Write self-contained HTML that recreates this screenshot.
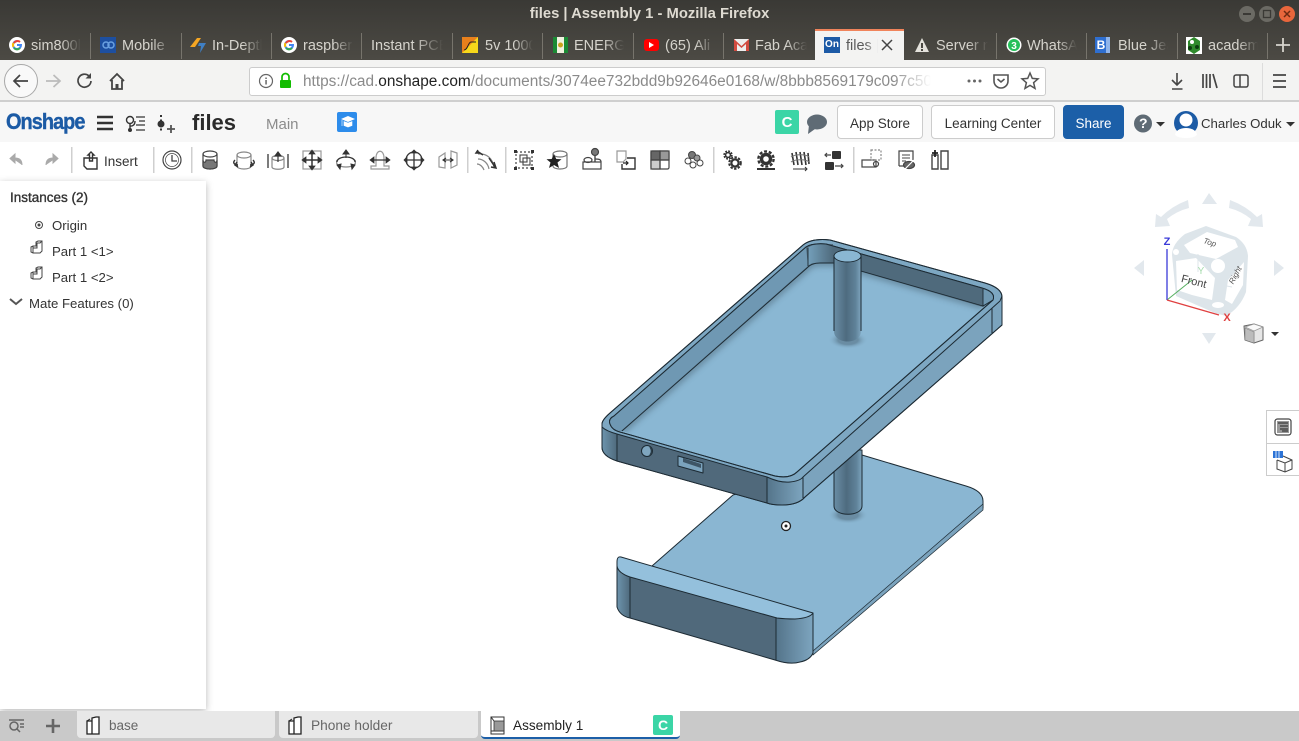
<!DOCTYPE html>
<html><head><meta charset="utf-8"><title>files | Assembly 1</title>
<style>
html,body{margin:0;padding:0;background:#fff;width:1299px;height:741px;overflow:hidden;font-family:"Liberation Sans","DejaVu Sans",sans-serif}
.a{position:absolute}
.t{position:absolute;white-space:nowrap}
.tab{position:absolute;top:37px;font-size:14.5px;line-height:18px;color:#d6d4cd;white-space:nowrap;overflow:hidden;-webkit-mask-image:linear-gradient(90deg,#000 60%,transparent 100%);mask-image:linear-gradient(90deg,#000 60%,transparent 100%)}
.sep{position:absolute;width:1px;background:#77746c;top:33px;height:26px}
.btn{position:absolute;top:105px;height:32px;border:1px solid #ccc;border-radius:4px;background:#fff;color:#333;font-size:13.5px;line-height:35px;text-align:center}
.side{font-size:13.2px;color:#333;line-height:16px}
svg{position:absolute;overflow:visible}
</style></head><body>
<div class="a" style="left:0;top:0;width:1299px;height:60px;background:linear-gradient(#3a3935,#4c4a44)"></div>
<div class="t" style="left:0;width:1299px;text-align:center;top:6px;font-size:14.8px;font-weight:bold;line-height:17px;color:#dfdbd2">files | Assembly 1 - Mozilla Firefox</div>
<svg style="left:0;top:0" width="1299" height="60">
<circle cx="1247" cy="14" r="8" fill="#6b6a64"/><rect x="1243" y="13" width="8" height="2" fill="#3a3935"/>
<circle cx="1267" cy="14" r="8" fill="#6b6a64"/><rect x="1263.5" y="10.5" width="7" height="7" fill="none" stroke="#3a3935" stroke-width="1.3"/>
<circle cx="1287" cy="14" r="8" fill="#e9663c"/><path d="M1284 11l6 6m0-6l-6 6" stroke="#6e2a12" stroke-width="1.5"/>
<circle cx="17" cy="45" r="8" fill="#fff"/><path d="M17 41a4 4 0 1 0 4 4h-4" fill="none" stroke="#4285f4" stroke-width="2"/><path d="M20 42a4 4 0 0 0-6 1" fill="none" stroke="#ea4335" stroke-width="2"/><path d="M13.500 43a4 4 0 0 0 0 4" fill="none" stroke="#fbbc05" stroke-width="2"/><path d="M14 48a4 4 0 0 0 6 0" fill="none" stroke="#34a853" stroke-width="2"/>
<rect x="100" y="37" width="16" height="16" fill="#1d4fa0"/><circle cx="106" cy="45" r="3" fill="none" stroke="#6aa0e0" stroke-width="1.5"/><circle cx="111" cy="45" r="3" fill="none" stroke="#6aa0e0" stroke-width="1.5"/>
<path d="M197 38l-7 9h5l6-9z" fill="#f5a623"/><path d="M199 43h7l-6 10 1-7h-3z" fill="#3f7fc4"/>
<circle cx="289" cy="45" r="8" fill="#fff"/><path d="M289 41a4 4 0 1 0 4 4h-4" fill="none" stroke="#4285f4" stroke-width="2"/><path d="M292 42a4 4 0 0 0-6 1" fill="none" stroke="#ea4335" stroke-width="2"/><path d="M285.500 43a4 4 0 0 0 0 4" fill="none" stroke="#fbbc05" stroke-width="2"/><path d="M286 48a4 4 0 0 0 6 0" fill="none" stroke="#34a853" stroke-width="2"/>
<rect x="462" y="37" width="16" height="16" fill="#f7d81b"/><path d="M462 37h16L462 53z" fill="#e8801c"/><path d="M464 50c4 0 4-8 7-8h5" stroke="#222" fill="none"/>
<rect x="553" y="37" width="15" height="16" fill="#1b8a34"/><rect x="557" y="37" width="7" height="16" fill="#f1f1e0"/><circle cx="560.500" cy="45" r="2.500" fill="#c9a31c"/>
<rect x="644" y="39" width="15" height="12" rx="3" fill="#f00"/><path d="M649 42l5 3-5 3z" fill="#fff"/>
<rect x="734" y="39" width="15" height="12" fill="#eee"/><path d="M734 39l7.500 7 7.500-7v12h-3v-7l-4.500 4-4.500-4v7h-3z" fill="#d24b40"/>
<path d="M915 52l7-14 7 14z" fill="#e4e2dc"/><rect x="921" y="43" width="2" height="5" fill="#4a4842"/><rect x="921" y="49" width="2" height="2" fill="#4a4842"/>
<circle cx="1014" cy="45" r="7.500" fill="#fff"/><circle cx="1014" cy="45" r="6" fill="#25c05a"/><text x="1014" y="49" font-size="10" font-weight="bold" fill="#fff" text-anchor="middle" font-family="Liberation Sans">3</text>
<rect x="1095" y="37" width="15" height="16" fill="#2f6fd0"/><rect x="1106" y="37" width="4" height="16" fill="#8fb4ea"/><text x="1101" y="49" font-size="12" font-weight="bold" fill="#fff" text-anchor="middle" font-family="Liberation Sans">B</text>
<rect x="1186" y="37" width="16" height="17" fill="#fff"/><path d="M1194 37l6 4v9l-6 4-6-4v-9z" fill="#2f8a2c"/><circle cx="1192" cy="42" r="2" fill="#fff"/><circle cx="1197" cy="47" r="2" fill="#0d3d10"/><circle cx="1190" cy="48" r="2" fill="#0d3d10"/>
<path d="M1283 38v14m-7-7h14" stroke="#d6d4cd" stroke-width="1.800"/>
</svg>
<div class="sep" style="left:90px"></div><div class="sep" style="left:181px"></div><div class="sep" style="left:271px"></div><div class="sep" style="left:361px"></div><div class="sep" style="left:452px"></div><div class="sep" style="left:542px"></div><div class="sep" style="left:633px"></div><div class="sep" style="left:723px"></div><div class="sep" style="left:996px"></div><div class="sep" style="left:1086px"></div><div class="sep" style="left:1177px"></div><div class="sep" style="left:1267px"></div>
<div class="tab" style="left:31px;width:50px">sim800l</div>
<div class="tab" style="left:122px;width:50px">Mobile</div>
<div class="tab" style="left:212px;width:50px">In-Depth</div>
<div class="tab" style="left:303px;width:50px">raspberry</div>
<div class="tab" style="left:371px;width:72px">Instant PCB</div>
<div class="tab" style="left:485px;width:48px">5v 1000</div>
<div class="tab" style="left:574px;width:50px">ENERGY</div>
<div class="tab" style="left:665px;width:50px">(65) Ali</div>
<div class="tab" style="left:755px;width:52px">Fab Academy</div>
<div class="a" style="left:815px;top:29px;width:89px;height:31px;background:#f3f3f2;border-top:2px solid #f0845b;box-sizing:border-box"></div>
<div class="tab" style="left:846px;width:32px;color:#5a5a5a">files |</div>
<div class="a" style="left:824px;top:37px;width:16px;height:16px;background:#1c5aa6;color:#fff;font-size:10px;font-weight:bold;line-height:16px;text-align:center">On</div>
<svg style="left:0;top:0" width="1299" height="100"><path d="M882 40l10 10m0-10l-10 10" stroke="#444" stroke-width="1.500"/></svg>
<div class="tab" style="left:936px;width:52px">Server not</div>
<div class="tab" style="left:1027px;width:50px">WhatsApp</div>
<div class="tab" style="left:1118px;width:50px">Blue Jeans</div>
<div class="tab" style="left:1208px;width:50px">academy</div>

<!-- nav bar -->
<div class="a" style="left:0;top:60px;width:1299px;height:40px;background:#f3f3f2"></div>
<div class="a" style="left:0;top:100px;width:1299px;height:2px;background:#cfcfcf"></div>
<div class="a" style="left:249px;top:67px;width:795px;height:27px;background:#fff;border:1px solid #ccc;border-radius:3px"></div>
<div class="a" style="left:1262px;top:63px;width:1px;height:37px;background:#dcdcdc"></div>
<div class="t" style="left:303px;top:72px;width:628px;overflow:hidden;font-size:15.4px;line-height:20px;color:#8a8a8a;-webkit-mask-image:linear-gradient(90deg,#000 94%,transparent 100%);mask-image:linear-gradient(90deg,#000 94%,transparent 100%)">https://cad.<span style="color:#222">onshape.com</span>/documents/3074ee732bdd9b92646e0168/w/8bbb8569179c097c500000</div>
<svg style="left:0;top:0" width="1299" height="100">
<circle cx="21" cy="81" r="16.500" fill="#f9f9f9" stroke="#a8a8a8"/><path d="M28 81H14m6-6l-6 6 6 6" fill="none" stroke="#444" stroke-width="1.700"/>
<path d="M60 81H46m7.500-6l6.500 6-6.500 6" fill="none" stroke="#bbb" stroke-width="1.700"/>
<path d="M91 81a6.500 6.500 0 1 1-2-5" fill="none" stroke="#444" stroke-width="1.700"/><path d="M91 73v5.500h-5.500z" fill="#444"/>
<path d="M110 81l7-7 7 7m-12-1v9h10v-9" fill="none" stroke="#444" stroke-width="1.800"/><rect x="115.500" y="84" width="3" height="5" fill="#444"/>
<circle cx="266" cy="81" r="6.500" fill="none" stroke="#666" stroke-width="1.200"/><rect x="265.300" y="80" width="1.500" height="4.500" fill="#666"/><rect x="265.300" y="77.500" width="1.500" height="1.500" fill="#666"/>
<rect x="280" y="80" width="11" height="8" rx="1" fill="#12bc00"/><path d="M282 80v-3a3.500 3.500 0 0 1 7 0v3" fill="none" stroke="#12bc00" stroke-width="1.700"/>
<circle cx="969" cy="81" r="1.500" fill="#666"/><circle cx="974.500" cy="81" r="1.500" fill="#666"/><circle cx="980" cy="81" r="1.500" fill="#666"/>
<path d="M994 75h14v6a7 7 0 0 1-14 0z" fill="none" stroke="#555" stroke-width="1.600"/><path d="M997.500 79l3.500 3 3.500-3" fill="none" stroke="#555" stroke-width="1.600"/>
<path d="M1030 73l2.300 5.400 5.700.5-4.400 3.800 1.400 5.700-5-3-5 3 1.400-5.700-4.400-3.800 5.700-.5z" fill="none" stroke="#555" stroke-width="1.500"/>
<path d="M1177 73v12m-5-5l5 5 5-5m-10 9h10.500" fill="none" stroke="#444" stroke-width="1.600"/>
<path d="M1203 74v14m3.500-14v14m3.500-14v14m3-14l4 14" fill="none" stroke="#444" stroke-width="1.700"/>
<rect x="1234" y="75" width="14" height="12" rx="2" fill="none" stroke="#444" stroke-width="1.500"/><path d="M1240 75v12" stroke="#444" stroke-width="1.500"/>
<path d="M1273 75h13m-13 6h13m-13 6h13" stroke="#444" stroke-width="1.700"/>
</svg>

<!-- onshape header -->
<div class="a" style="left:0;top:102px;width:1299px;height:40px;background:#f7f7f7"></div>
<div class="t" style="left:6px;top:108px;font-size:22.500px;font-weight:bold;color:#1c5ba5;line-height:28px;letter-spacing:-1.100px;transform:scaleX(.886);transform-origin:0 0;-webkit-text-stroke:.4px #1c5ba5">Onshape</div>
<svg style="left:0;top:0" width="1299" height="180">
<path d="M97 117h16M97 123h16M97 129h16" stroke="#333" stroke-width="2.400"/>
<circle cx="130" cy="120" r="3.500" fill="none" stroke="#333" stroke-width="1.400"/><path d="M130 123.500v8m5-10.500c0 6-5 5-5 5" fill="none" stroke="#333" stroke-width="1.400"/><circle cx="130" cy="130" r="2" fill="#333"/><path d="M136 117h9m-6 4h6m-9 4h9m-9 5h9" stroke="#555" stroke-width="1.400"/>
<path d="M161 115v18" stroke="#333" stroke-width="2" stroke-dasharray="2 2.500"/><circle cx="161" cy="124" r="3.500" fill="#333"/><path d="M167 129h8m-4-4v8" stroke="#555" stroke-width="1.800"/>
<rect x="337" y="112" width="20" height="20" rx="2" fill="#2d8ceb"/><path d="M341 119l7-3 7 3-7 3z" fill="#fff"/><path d="M344 121.500v4l4 1.500 4-1.500v-4l-4 1.500zM342 120v6" fill="#fff" stroke="#fff" stroke-width=".6"/>
<rect x="775" y="110" width="24" height="24" rx="2" fill="#3bd5a6"/>
<ellipse cx="817" cy="122" rx="10" ry="7.500" fill="#5f6b75"/><path d="M809 125l-1 9 7-5z" fill="#5f6b75"/>
<circle cx="1143" cy="123.500" r="9" fill="#5f6b75"/>
<path d="M1156 122h9l-4.500 4.500z" fill="#333"/>
<circle cx="1186" cy="123" r="12" fill="#1c5ba5"/><circle cx="1186" cy="120" r="6.500" fill="#fff"/><path d="M1175 135a11 7 0 0 1 22 0 12 5 0 0 1-22 0z" fill="#fff"/>
<path d="M1286 122h9l-4.500 4.500z" fill="#333"/>
</svg>
<div class="t" style="left:775px;top:111px;width:24px;text-align:center;font-size:15px;font-weight:bold;color:#fff;line-height:24px">C</div>
<div class="t" style="left:1143px;top:113px;width:0;text-indent:-4px;font-size:14px;font-weight:bold;color:#fff;line-height:21px">?</div>
<div class="t" style="left:192px;top:109px;font-size:22px;font-weight:bold;color:#2b2b2b;line-height:28px">files</div>
<div class="t" style="left:266px;top:116px;font-size:15px;color:#8c8c8c;line-height:18px">Main</div>
<div class="btn" style="left:837px;width:84px">App Store</div>
<div class="btn" style="left:931px;width:122px">Learning Center</div>
<div class="btn" style="left:1063px;width:59px;background:#1c5fa8;border-color:#1c5fa8;color:#fff">Share</div>
<div class="t" style="left:1201px;top:116px;font-size:13.200px;color:#333;line-height:16px">Charles Oduk</div>

<!-- toolbar -->
<div class="a" style="left:0;top:142px;width:1299px;height:38px;background:#fff"></div>
<div class="t" style="left:104px;top:153px;font-size:13.500px;color:#333;line-height:18px">Insert</div>
<svg style="left:0;top:0" width="1299" height="180" fill="none" stroke="#444" stroke-width="1.200">
<g fill="#cfcfcf" stroke="none"><rect x="71" y="147" width="1.500" height="26"/><rect x="153" y="147" width="1.500" height="26"/><rect x="191" y="147" width="1.500" height="26"/><rect x="467" y="147" width="1.500" height="26"/><rect x="505" y="147" width="1.500" height="26"/><rect x="713" y="147" width="1.500" height="26"/><rect x="853" y="147" width="1.500" height="26"/></g>
<path d="M22 165c0-5-3-7-7-7h-3m3-4-5 4.500 5 4.500z" fill="#aaa" stroke="#aaa" stroke-width="1"/>
<path d="M46 165c0-5 3-7 7-7h3m-3-4 5 4.500-5 4.500z" fill="#aaa" stroke="#aaa" stroke-width="1"/>
<path d="M84 158h13v11H87l-3-3zM88 155l3-3 3 3-1.500 0v6h-3v-6z" fill="#fff" stroke="#333" stroke-width="1.400"/>
<circle cx="172" cy="160" r="9" stroke-width="1.200"/><circle cx="172" cy="160" r="6.500" stroke-width=".7"/><path d="M172 155v6h5" stroke-width="1.300"/>
<g transform="translate(210,160)"><ellipse cx="0" cy="-6" rx="7" ry="3"/><path d="M-7-6V6c0 4 14 4 14 0V-6"/><path d="M-7 0c0 3 3 3 3 0h8c0 3 3 3 3 0V6c0 4-14 4-14 0z" fill="#777"/></g>
<g transform="translate(244,160)"><ellipse cx="0" cy="-5" rx="7" ry="3" stroke="#888"/><path d="M-7-5V6c0 4 14 4 14 0V-5" stroke="#888"/><path d="M-9 0c-3 3 0 5 3 5m-1-3-2 3 3 2M9 0c3 3 0 5-3 5m1-3 2 3-3 2" stroke="#333" stroke-width="1.400"/></g>
<g transform="translate(278,160)"><path d="M-10-6V8M10-6V8" stroke-width="1.400"/><ellipse cx="0" cy="-2" rx="6" ry="2.500" stroke="#888"/><path d="M-6-2V7c0 3 12 3 12 0V-2" stroke="#888"/><path d="M0 2v-9m-3 3 3-4 3 4z" fill="#333" stroke="#333"/></g>
<g transform="translate(312,160)"><rect x="-9" y="-9" width="18" height="18" stroke="#999"/><path d="M0-8V8M-8 0H8" stroke-width="1.500" stroke="#333"/><path d="M-3-6 0-10 3-6zM-3 6 0 10 3 6zM-6-3-10 0-6 3zM6-3 10 0 6 3z" fill="#333" stroke="#333" stroke-width=".8"/></g>
<g transform="translate(346,160)"><path d="M-9 0c-2 5 3 7 9 7s11-2 9-7" stroke="#888"/><path d="M-3-6 0-10 3-6zM-9 5-6 9-5 4zM9 5 6 9 5 4zM0-7v5" fill="#333" stroke="#333" stroke-width="1"/><path d="M-9 2c0-3 4-5 9-5s9 2 9 5" stroke="#333" stroke-width="1.300"/></g>
<g transform="translate(380,160)"><path d="M-4-2c0-9 8-9 8 0v8h5v3H-9V6h5z" stroke="#999"/><path d="M-9 0H9" stroke="#333" stroke-width="1.300"/><path d="M-6-3-10 0-6 3zM6-3 10 0 6 3z" fill="#333" stroke="#333" stroke-width=".8"/></g>
<g transform="translate(414,160)"><circle r="8" stroke="#333" stroke-width="1.300"/><path d="M0-8V8M-8 0H8" stroke="#333" stroke-width="1.300"/><path d="M-3-7 0-10 3-7zM-3 7 0 10 3 7zM-7-3-10 0-7 3zM7-3 10 0 7 3z" fill="#333" stroke="#333" stroke-width=".8"/></g>
<g transform="translate(448,160)"><path d="M-9-3-3-7V8L-9 7zM9-7 3-9V8L9 5z" stroke="#999"/><path d="M-5 0H5m-3-2 3 2-3 2m-4-4-3 2 3 2" stroke="#333" stroke-width="1.100"/></g>
<g transform="translate(486,160)"><path d="M-8-6C0-7 7-2 8 8M-8-1C-3-1 2 3 3 9M-9 4C-6 4-3 7-2 10" stroke="#888"/><path d="M-9-9-3-5M-8-10l-2 3 4 0M3-2 9 7M8 2l2 6-5-1" stroke="#333" stroke-width="1.500"/></g>
<g transform="translate(524,160)"><rect x="-8" y="-8" width="16" height="16" stroke-dasharray="2 2"/><rect x="-4" y="-5" width="7" height="7" stroke-width="1.100"/><rect x="-1" y="-2" width="7" height="7" stroke-width="1.100"/><g fill="#333" stroke="none"><rect x="-10" y="-10" width="3" height="3"/><rect x="7" y="-10" width="3" height="3"/><rect x="-10" y="7" width="3" height="3"/><rect x="7" y="7" width="3" height="3"/></g></g>
<g transform="translate(558,160)"><ellipse cx="2" cy="-6" rx="7" ry="3" stroke="#777"/><path d="M-5-6V6c0 4 14 4 14 0V-6" stroke="#777"/><path d="M-4-6-1.700-1 3.500-.7-.5 2.500 1 8-4 5-9 8-7.500 2.500-11.500-.7-6.300-1z" fill="#222" stroke="none"/></g>
<g transform="translate(592,160)"><rect x="-9" y="2" width="18" height="7" fill="#fff"/><ellipse cx="-4" cy="0" rx="4" ry="2.500"/><path d="M3-1c3 0 6 0 6 3"/><circle cx="3" cy="-8" r="3.500" fill="#777"/><path d="M3-4v6" stroke-width="1.400"/></g>
<g transform="translate(626,160)"><path d="M-9-9h9v8l-3 3h-6z" stroke="#999"/><path d="M-4 4V9H9V-2H1" stroke="#333" stroke-width="1.400"/><path d="M-3 3h5m-2-2 2 2-2 2" stroke="#222"/></g>
<g transform="translate(660,160)"><rect x="-9" y="-9" width="18" height="18" rx="1.500"/><rect x="-9" y="-9" width="9" height="9" fill="#666"/><rect x="0" y="-9" width="9" height="9" fill="#999"/><rect x="-9" y="0" width="9" height="9" fill="#ccc"/><path d="M0-9V9M-9 0H9"/></g>
<g transform="translate(694,160)" stroke-width="1"><circle cx="-2" cy="-5" r="3.500" fill="#777"/><circle cx="3" cy="-2" r="3" fill="#999"/><circle cx="-6" cy="1" r="3"/><circle cx="6" cy="3" r="3"/><circle cx="-1" cy="5" r="3"/></g>
<g transform="translate(732,160)"><circle cx="-4" cy="-5" r="3.800" stroke="#333" stroke-width="1.800" stroke-dasharray="1.800 1.200"/><circle cx="-4" cy="-5" r="2.400" stroke="#333" stroke-width="1.500"/><circle cx="3" cy="3" r="5.800" stroke="#333" stroke-width="2" stroke-dasharray="2.400 1.400"/><circle cx="3" cy="3" r="3.600" stroke="#333" stroke-width="2.200"/></g>
<g transform="translate(766,160)"><circle cy="-1" r="7.600" stroke="#333" stroke-width="2.400" stroke-dasharray="3 1.800"/><circle cy="-1" r="4.500" stroke="#333" stroke-width="3.400"/><rect x="-9" y="8" width="18" height="2" fill="#333" stroke="none"/></g>
<g transform="translate(800,160)" stroke="#333" stroke-width="1.600"><path d="M-8-7-6 5M-4-8-2 5M0-8 2 5M4-8 6 5M8-7 9 4"/><path d="M-9-3c4-3 15-3 18 0M-9 2c4-3 15-3 18 0" stroke="#777" stroke-width="1"/><path d="M-7 9H7m-2-2 2 2-2 2" stroke-width="1"/></g>
<g transform="translate(834,160)"><rect x="-2" y="-9" width="9" height="8" rx="1" fill="#333" stroke="none"/><rect x="-9" y="2" width="9" height="8" rx="1" fill="#333" stroke="none"/><path d="M-3-5h-6m2-2-2 2 2 2M1 6h8m-2-2 2 2-2 2" stroke-width="1.200"/></g>
<g transform="translate(872,160)"><rect x="-10" y="0" width="14" height="7"/><rect x="-1" y="-10" width="10" height="10" stroke-dasharray="2 1.500" stroke="#888"/><circle cx="4" cy="4" r="2.500"/></g>
<g transform="translate(906,160)"><path d="M-7 6V-9H7V0M-7 6H0"/><path d="M-4-5h8M-4-2h8M-4 1h4" stroke-width=".9"/><ellipse cx="3" cy="5" rx="5.500" ry="3.500" fill="#666"/><path d="M-2 10 8 0" stroke="#fff" stroke-width="1.200"/></g>
<g transform="translate(940,160)"><path d="M-8-5h6V9h-6zM1-9h7V9H1z" stroke-width="1.400"/><path d="M-5-3V-10m-3 3H-2" stroke-width="1.800" stroke="#222"/></g>
</svg>

<!-- sidebar -->
<div class="a" style="left:0;top:181px;width:206px;height:528px;background:#fff;box-shadow:0 2px 7px rgba(0,0,0,.28)"></div>
<div class="t side" style="left:10px;top:190px;font-size:13.500px;-webkit-text-stroke:.35px #333">Instances (2)</div>
<div class="t side" style="left:52px;top:218px">Origin</div>
<div class="t side" style="left:52px;top:244px">Part 1 &lt;1&gt;</div>
<div class="t side" style="left:52px;top:270px">Part 1 &lt;2&gt;</div>
<div class="t side" style="left:29px;top:296px">Mate Features (0)</div>
<svg style="left:0;top:180px" width="206" height="140" fill="none" stroke="#444">
<circle cx="39" cy="45" r="3.500"/><circle cx="39" cy="45" r="1.500" fill="#444" stroke="none"/>
<path d="M31 67l2-1h3v-4l2-1h4v10l-2 2H33l-2-1zM33 66v7M42 61l-2 2h-3v5h-4" stroke-width="1"/>
<path d="M31 93l2-1h3v-4l2-1h4v10l-2 2H33l-2-1zM33 92v7M42 87l-2 2h-3v5h-4" stroke-width="1"/>
<path d="M10 119l6 5 6-5" stroke-width="2" stroke="#555"/>
</svg>

<!-- 3D model -->
<svg style="left:0;top:0" width="1299" height="741" viewBox="0 0 1299 741" stroke-linejoin="round">
<defs>
<linearGradient id="pin" x1="0" x2="1" y1="0" y2="0"><stop offset="0" stop-color="#6a8ea6"/><stop offset=".45" stop-color="#4e6b7f"/><stop offset=".8" stop-color="#5f8299"/><stop offset="1" stop-color="#7ea5be"/></linearGradient>
<linearGradient id="cor" x1="0" x2="1" y1="0" y2="0"><stop offset="0" stop-color="#54748a"/><stop offset="1" stop-color="#7da5bf"/></linearGradient>
<linearGradient id="corl" x1="0" x2="1" y1="0" y2="0"><stop offset="0" stop-color="#6d94ad"/><stop offset="1" stop-color="#4f6a7c"/></linearGradient>
<linearGradient id="corb" x1="0" x2="1" y1="0" y2="0"><stop offset="0" stop-color="#74a0bb"/><stop offset="1" stop-color="#4f6a7c"/></linearGradient>
<radialGradient id="shade" cx=".5" cy=".5" r=".5"><stop offset=".5" stop-color="#4f6a7c" stop-opacity=".55"/><stop offset="1" stop-color="#8ab7d3" stop-opacity="0"/></radialGradient>
<clipPath id="floor"><path d="M622 431L807 268Q811 263 820 263H833L983 306L993 300L797 472Q790 479 775 476Z"/></clipPath>
<filter id="bl" x="-20%" y="-20%" width="140%" height="140%"><feGaussianBlur stdDeviation="3"/></filter>
</defs>
<!-- base plate -->
<path d="M862 455L966 486Q983 491 983 501L983 508L813 654L800 620L652 566L733 495Z" fill="#8ab6d2" stroke="#1c2a33" stroke-width="1"/>
<path d="M983 504L813 651L813 655L983 510Z" fill="#7ba3bd" stroke="#1c2a33" stroke-width=".7"/>
<ellipse cx="848" cy="515" rx="20" ry="9" fill="url(#shade)"/>
<!-- lower pin -->
<path d="M834 450V506C834 517 862 517 862 506V450Z" fill="url(#pin)" stroke="#1c2a33" stroke-width="1"/>
<!-- bottom block -->
<path d="M617 568V607Q620 616 630 618L775 660Q790 665 800 662Q810 660 813 653V613L777 618L630 577Q620 575 617 568Z" fill="#50697b"/>
<path d="M617 568Q620 575 630 577V618Q620 616 617 607Z" fill="url(#corl)"/>
<path d="M776 618Q800 620 813 613V653Q810 660 800 662Q785 665 776 660Z" fill="url(#cor)"/>
<path d="M617 562Q617 556 621 557L813 613Q810 618 795 619Q785 619 777 618L630 577Q618 573 617 566Z" fill="#94c0dc" stroke="#1c2a33" stroke-width="1"/>
<path d="M617 566V607Q620 616 630 618L775 660Q790 665 800 662Q810 660 813 653V613M630 577V618M776 618V660" fill="none" stroke="#1c2a33" stroke-width="1"/>
<!-- origin -->
<circle cx="786" cy="526" r="4.500" fill="#fff" stroke="#222" stroke-width="1.300"/><circle cx="786" cy="526" r="1.500" fill="#222"/>
<!-- tray body -->
<path d="M602 424Q602 420 610 413L803 245Q812 238 830 240L985 283Q1002 288 1002 297V325L805 497Q798 505 782 505Q772 505 767 503L617 461Q602 456 602 447Z" fill="#7da7c2" stroke="#1c2a33" stroke-width="1"/>
<!-- tray front wall -->
<path d="M602 427Q606 431 617 434L767 477Q780 483 790 482Q800 481 803 477L803 498Q798 505 782 505Q772 505 767 503L617 461Q602 456 602 447Z" fill="#50697b"/>
<path d="M602 427Q606 431 617 434V461Q602 456 602 447Z" fill="url(#corl)"/>
<path d="M767 477Q780 483 790 482Q800 481 803 477V498Q798 505 782 505Q772 505 767 503Z" fill="url(#cor)"/>
<path d="M803 477L1000 301V326L803 498Z" fill="#7ba3bd"/>
<path d="M602 427Q606 431 617 434L767 477Q780 483 790 482Q800 481 803 477L1000 301L1002 296M617 434V461M767 477V503M803 477V498M992 308V333" fill="none" stroke="#1c2a33" stroke-width="1"/>
<path d="M602 424Q602 420 610 413L803 245Q812 238 830 240L985 283Q1002 288 1002 297V325L805 497Q798 505 782 505Q772 505 767 503L617 461Q602 456 602 447Z" fill="none" stroke="#1c2a33" stroke-width="1"/>
<!-- inner well -->
<path d="M610 424Q608 419 614 416L806 247Q812 243 826 244L982 288Q996 292 993 300L797 472Q790 479 775 476L620 432Q612 430 610 424Z" fill="#8ab7d3" stroke="#1c2a33" stroke-width="1"/>
<!-- inner walls -->
<path d="M806 247Q812 243 826 244L982 288Q996 292 993 300L983 307L862 272L833 263H817Q810 263 807 268L622 431L620 431Q612 430 610 424Q608 419 614 416Z" fill="#4f6a7c"/>
<path d="M614 416L806 247L808 266L621 431Q612 430 610 424Q608 419 614 416Z" fill="#6f98b3"/>
<path d="M808 248V266Q812 262 820 263H833V244Q812 243 808 248Z" fill="url(#corb)"/>
<path d="M983 289L983 306L993 300Q996 292 983 289Z" fill="#6f98b2"/>
<g clip-path="url(#floor)"><path d="M622 431L807 268Q811 263 820 263H833L983 306" fill="none" stroke="#4f6a7c" stroke-width="7" opacity=".55" filter="url(#bl)"/></g>
<path d="M806 247Q812 243 826 244L982 288Q996 292 993 300L797 472Q790 479 775 476L620 432Q612 430 610 424Q608 419 614 416Z" fill="none" stroke="#1c2a33" stroke-width="1"/>
<path d="M622 431L807 268Q811 263 820 263H833L983 306L993 300M808 248V266M983 289V306" fill="none" stroke="#1c2a33" stroke-width=".9"/>
<!-- upper pin -->
<ellipse cx="848" cy="340" rx="20" ry="9" fill="url(#shade)"/>
<path d="M834 255V331C834 345 861 345 861 331V255Z" fill="url(#pin)"/>
<path d="M834 255V331M861 255V331" stroke="#1c2a33" stroke-width="1" fill="none"/>
<ellipse cx="847.500" cy="256" rx="13.500" ry="6" fill="#8ab7d3" stroke="#1c2a33" stroke-width=".9"/>
<!-- ports -->
<circle cx="647" cy="451" r="5.500" fill="#7fa6bf" stroke="#1c2a33" stroke-width="1"/><path d="M650 447a6 6 0 0 1 0 8" stroke="#2a3b46" stroke-width="1.500" fill="none"/>
<path d="M678 456L703 463V473L678 466Z" fill="#7ba3bd" stroke="#1c2a33" stroke-width="1"/><path d="M683 458L701 464V468L683 462Z" fill="#3e5566"/>
<!-- gizmo -->
<g fill="#e2e8ed">
<path d="M1202 204l7-11 8 11zM1202 333h14l-7 11zM1144 260v16l-10-8zM1274 260v16l10-8z"/>
<path d="M1188 200L1189 208Q1177 211 1167 219L1170 226L1155 227L1156 214L1161 217Q1172 206 1188 200Z"/>
<path d="M1230 200L1229 208Q1241 211 1251 219L1248 226L1263 227L1262 214L1257 217Q1246 206 1230 200Z"/>
</g>
<path d="M1206 226L1236 237Q1247 244 1248 256L1246 292Q1240 308 1226 316L1215 313L1176 296L1172 255Q1172 244 1185 234Z" fill="#dde5ea"/>
<path d="M1184 245L1207 232L1235 240L1238 247L1216 259L1190 253Z" fill="#fff"/>
<path d="M1176 261L1196 258L1215 278L1212 300L1192 295L1177 290Z" fill="#fff"/>
<path d="M1244 262L1243 285L1232 304L1225 300L1228 280Z" fill="#fff"/>
<circle cx="1218" cy="266" r="7" fill="#fff"/><circle cx="1176" cy="252" r="3" fill="#fff"/><ellipse cx="1218" cy="305" rx="6" ry="3" fill="#fff"/>
<path d="M1198 254V272M1216 284L1232 287" stroke="#dde5ea" stroke-width="1"/>
<path d="M1167 300L1192 280" stroke="#55b060" stroke-width="1"/>
<path d="M1167 300V249" stroke="#3a3ad8" stroke-width="1.300"/>
<path d="M1167 300L1219 315" stroke="#e04040" stroke-width="1.300"/>
<path d="M1244 326L1254 324L1263 327V340L1254 343L1245 340Z" fill="#e6e6e6" stroke="#666" stroke-width="1"/><path d="M1245 327L1254 331L1263 327L1254 324ZM1254 331V343" fill="#fafafa" stroke="#999" stroke-width=".8"/><path d="M1245 328L1254 332V343L1245 340Z" fill="#bcbcbc" stroke="#777" stroke-width=".5"/>
<path d="M1271 332h8l-4 4z" fill="#333"/>
<text x="1167" y="245" font-size="11" font-weight="bold" fill="#3a3ad8" text-anchor="middle" font-family="Liberation Sans">Z</text>
<text x="1227" y="321" font-size="11" font-weight="bold" fill="#e04040" text-anchor="middle" font-family="Liberation Sans">X</text>
<text x="1201" y="274" font-size="10" fill="#a8dcae" text-anchor="middle" font-family="Liberation Sans">Y</text>
<text x="1194" y="285" font-size="11" fill="#444" text-anchor="middle" font-family="Liberation Sans" transform="rotate(14 1194 281)">Front</text>
<text x="1210" y="245" font-size="8" font-style="italic" fill="#555" text-anchor="middle" font-family="Liberation Sans" transform="rotate(18 1210 242)">Top</text>
<text x="1235" y="278" font-size="8" font-style="italic" fill="#555" text-anchor="middle" font-family="Liberation Sans" transform="rotate(-62 1235 275)">Right</text>
</svg>

<!-- right panel -->
<div class="a" style="left:1266px;top:410px;width:33px;height:66px;background:#fff;border:1px solid #ccc;border-right:0;box-sizing:border-box"></div>
<div class="a" style="left:1266px;top:443px;width:33px;height:1px;background:#ccc"></div>
<svg style="left:0;top:0" width="1299" height="741" fill="none">
<rect x="1275" y="419" width="16" height="16" rx="2.500" stroke="#444" stroke-width="1.200"/><rect x="1277" y="421" width="12" height="12" fill="#999"/><path d="M1278 423h10m-8 3h8m-8 3h8m-6 2h6" stroke="#222" stroke-width="1"/>
<rect x="1273" y="451" width="10" height="7" fill="#2c73d6"/><path d="M1276 451v7m3-7v7" stroke="#fff" stroke-width=".8"/>
<path d="M1283 456l9 4v9l-7 3-8-3v-9M1277 460l8 3 7-3M1285 463v9" stroke="#444" stroke-width="1"/>
</svg>

<!-- bottom bar -->
<div class="a" style="left:0;top:711px;width:1299px;height:30px;background:#c9c9c9"></div>
<div class="a" style="left:77px;top:711px;width:198px;height:27px;background:#e8e8e8;border-radius:0 0 4px 4px"></div>
<div class="a" style="left:279px;top:711px;width:199px;height:27px;background:#e8e8e8;border-radius:0 0 4px 4px"></div>
<div class="a" style="left:481px;top:711px;width:199px;height:28px;background:#fff;border-bottom:2px solid #1c5fa8;box-sizing:border-box;border-radius:0 0 4px 4px"></div>
<div class="t" style="left:109px;top:717px;font-size:13.500px;color:#666;line-height:17px">base</div>
<div class="t" style="left:311px;top:717px;font-size:13.700px;color:#666;line-height:17px">Phone holder</div>
<div class="t" style="left:513px;top:717px;font-size:13.600px;color:#222;line-height:17px">Assembly 1</div>
<svg style="left:0;top:0" width="1299" height="741" fill="none">
<path d="M9 720h15" stroke="#666" stroke-width="1.500"/><circle cx="14" cy="726" r="4" stroke="#666" stroke-width="1.500"/><path d="M17 729l3 3M20 724h4m-4 3h4" stroke="#666" stroke-width="1.500"/>
<path d="M53 719v14M46 726h14" stroke="#666" stroke-width="2.600"/>
<path d="M87 721h5v13h-5zM92 718l4-1h3v17h-7z" fill="#fff" stroke="#222" stroke-width="1.300"/><path d="M87 721l3-2" stroke="#222"/>
<path d="M289 721h5v13h-5zM294 718l4-1h3v17h-7z" fill="#fff" stroke="#222" stroke-width="1.300"/><path d="M289 721l3-2" stroke="#222"/>
<rect x="491" y="717" width="13" height="14" stroke="#333" stroke-width="1"/><rect x="494" y="721" width="10" height="10" fill="#999" stroke="#333" stroke-width=".8"/><path d="M491 717l3 4M491 731v3h13v-3" stroke="#333"/>
<rect x="653" y="715" width="20" height="20" rx="2" fill="#3bd5a6"/>
</svg>
<div class="t" style="left:653px;top:715px;width:20px;text-align:center;font-size:14px;font-weight:bold;color:#fff;line-height:20px">C</div>
</body></html>
